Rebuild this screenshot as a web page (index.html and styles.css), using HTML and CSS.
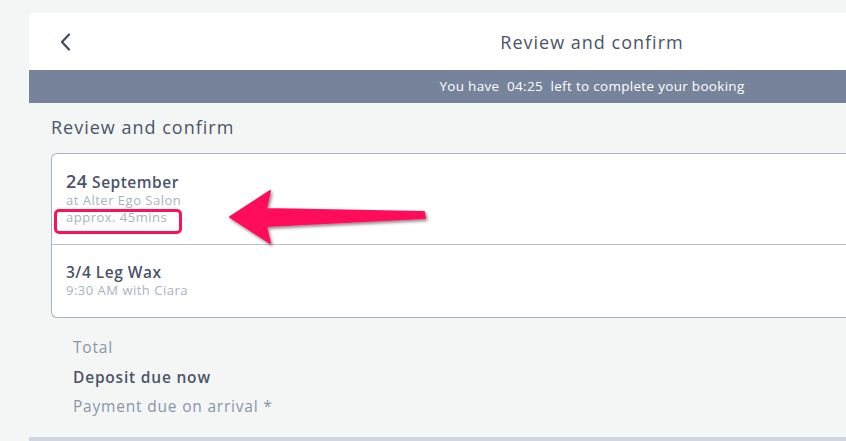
FILE: index.html
```html
<!doctype html>
<html lang="en">

<head>
    <meta charset="UTF-8">
    <title>Review and confirm</title>
    <link rel="stylesheet" href="styles.css">
</head>

<body>
    <div class="page">
        <div class="container">
            <div class="header">
                <a class="back" href="#">
                    <svg width="12" height="18" viewBox="0 0 12 18"><path d="M9 1.5 L2 9 L9 16.5" fill="none" stroke="#3c4a63" stroke-width="2.2" stroke-linecap="round" stroke-linejoin="round"/></svg>
                </a>
                <h1>Review and confirm</h1>
            </div>
            <div class="timer">You have&nbsp; 04:25 &nbsp;left to complete your booking</div>

            <div class="content">
                <h2>Review and confirm</h2>
                <div class="card">
                    <div class="row">
                        <div class="title"><span class="day">24</span> September</div>
                        <div class="sub">at Alter Ego Salon</div>
                        <div class="sub">approx. 45mins</div>
                    </div>
                    <div class="row">
                        <div class="title">3/4 Leg Wax</div>
                        <div class="sub">9:30 AM with Ciara</div>
                    </div>
                </div>
                <ul class="totals">
                    <li>Total</li>
                    <li class="strong">Deposit due now</li>
                    <li>Payment due on arrival *</li>
                </ul>
            </div>
            <div class="footer"></div>
        </div>

        <!-- annotation -->
        <div class="mark"></div>
        <svg class="arrow" width="220" height="70" viewBox="0 0 220 70">
            <defs>
                <filter id="sh" x="-10%" y="-20%" width="130%" height="160%">
                    <feDropShadow dx="1.5" dy="2" stdDeviation="1.5" flood-color="#000" flood-opacity="0.45"/>
                </filter>
            </defs>
            <path d="M4 32 L44 6 L40 24 L198 27 L199 33 L40 41 L44 58 Z" fill="#ff0f5a" filter="url(#sh)" stroke="#ff0f5a" stroke-width="2" stroke-linejoin="round"/>
        </svg>
    </div>
</body>

</html>
```

FILE: styles.css
```css
* {
    margin: 0;
    padding: 0;
    list-style: none;
    box-sizing: border-box;
}

body {
    background: #f4f6f5;
    font-family: "Open Sans", "Liberation Sans", sans-serif;
    overflow: hidden;
}

.page {
    position: relative;
    padding: 13px 0 0 29px;
    width: 846px;
    height: 441px;
    overflow: hidden;
}

.container {
    width: 1126px;
}

.header {
    height: 57px;
    background: #fff;
    border-radius: 6px 0 0 0;
    display: flex;
    align-items: center;
    position: relative;
}

.back {
    display: flex;
    margin-left: 31px;
    margin-top: 1px;
}

.header h1 {
    position: absolute;
    left: 0;
    right: 0;
    text-align: center;
    font-size: 18px;
    letter-spacing: 1px;
    font-weight: 500;
    color: #4a5469;
    pointer-events: none;
}

.timer {
    height: 33px;
    background: #76839b;
    color: #fff;
    font-size: 13.5px;
    letter-spacing: 0.3px;
    text-align: center;
    line-height: 33px;
}

.content {
    padding: 0 0 0 22px;
    height: 334px;
}

.content h2 {
    font-size: 18px;
    letter-spacing: 1px;
    font-weight: 500;
    color: #4a5469;
    line-height: 24px;
    padding: 12px 0 0 0;
    margin-bottom: 14px;
}

.card {
    background: #fff;
    border: 1px solid #aab1c2;
    border-right: 0;
    border-radius: 6px 0 0 6px;
}

.row {
    padding: 17px 14px 18px;
}

.row + .row {
    border-top: 1px solid #b8bfcd;
}

.title {
    font-size: 15.5px;
    letter-spacing: 0.5px;
    font-weight: 600;
    color: #4a5469;
    line-height: 20px;
}

.title .day {
    font-size: 18px;
}

.sub {
    font-size: 13px;
    letter-spacing: 0.5px;
    color: #a9b2c4;
    line-height: 17px;
}

.totals {
    padding: 15px 0 0 22px;
}

.totals li {
    font-size: 15.5px;
    letter-spacing: 0.8px;
    color: #8a95aa;
    line-height: 29.5px;
}

.totals .strong {
    font-weight: 600;
    color: #4a5469;
}

.footer {
    height: 4px;
    background: #d1d7df;
}

/* annotation */
.mark {
    position: absolute;
    left: 54px;
    top: 209px;
    width: 128px;
    height: 25px;
    border: 3px solid #ff1158;
    border-radius: 5px;
}

.arrow {
    position: absolute;
    left: 226px;
    top: 185px;
}
```
